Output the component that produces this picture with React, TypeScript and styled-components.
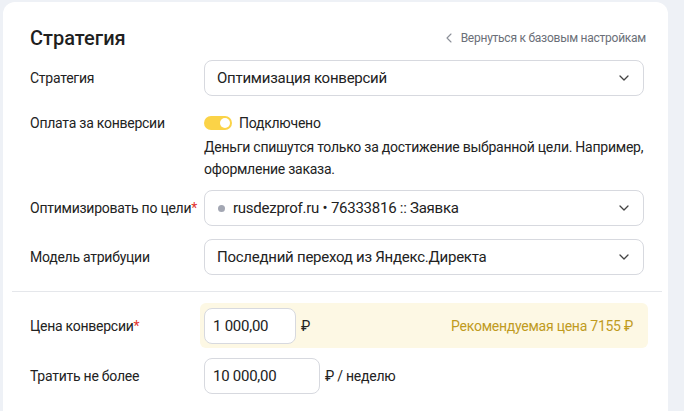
import React from 'react';
import styled, { createGlobalStyle } from 'styled-components';

const GlobalStyle = createGlobalStyle`
  html, body {
    margin: 0;
    padding: 0;
    background: #eef1f6;
    font-family: Roboto, "Liberation Sans", sans-serif;
    color: #222;
  }
`;

const Page = styled.div`
  width: 684px;
  height: 411px;
  overflow: hidden;
  padding: 2px 16px 0 3px;
  box-sizing: border-box;
  letter-spacing: -0.25px;
`;

const Card = styled.div`
  background: #fff;
  border-radius: 12px;
  padding: 0 0 30px;
  min-height: 420px;
`;

const Section = styled.div`
  padding: 0 24px 0 27px;
  display: flex;
  flex-direction: column;
`;

const Header = styled.div`
  display: flex;
  align-items: center;
  justify-content: space-between;
  padding-top: 23px;
  height: 26px;
  margin-bottom: 9px;
`;

const Title = styled.h2`
  margin: 0;
  font-size: 20px;
  font-weight: 500;
  color: #1f1f1f;
  letter-spacing: 0;
`;

const BackLink = styled.a`
  display: flex;
  align-items: center;
  gap: 9px;
  font-size: 12px;
  color: #6b6f78;
  margin-right: -2px;
  cursor: pointer;
`;

const Row = styled.div<{ $gap?: number; $align?: string }>`
  display: grid;
  grid-template-columns: 174px 1fr;
  align-items: ${(p) => p.$align || 'center'};
  margin-bottom: ${(p) => p.$gap ?? 13}px;
`;

const Label = styled.div`
  font-size: 14px;
  color: #222;
  line-height: 20px;
`;

const Required = styled.span`
  color: #e2342d;
`;

const SelectBox = styled.div`
  height: 36px;
  box-sizing: border-box;
  border: 1px solid #d7d9df;
  border-radius: 8px;
  display: flex;
  align-items: center;
  padding: 0 14px 0 12px;
  font-size: 15px;
  color: #222;
  gap: 8px;
`;

const SelectText = styled.span`
  flex: 1;
`;

const Dot = styled.span`
  width: 7px;
  height: 7px;
  border-radius: 50%;
  background: #a3a7b3;
  margin-left: 1px;
`;

const ToggleLine = styled.div`
  display: flex;
  align-items: center;
  gap: 7px;
  font-size: 14px;
  line-height: 20px;
`;

const Toggle = styled.span`
  width: 28px;
  height: 14px;
  border-radius: 7px;
  background: #fbd347;
  position: relative;
  &::after {
    content: '';
    position: absolute;
    right: 2px;
    top: 2px;
    width: 10px;
    height: 10px;
    border-radius: 50%;
    background: #fff;
  }
`;

const Hint = styled.p`
  margin: 3px 0 0;
  font-size: 14px;
  line-height: 22px;
  color: #222;
  max-width: 440px;
`;

const Divider = styled.hr`
  border: 0;
  border-top: 1px solid #e5e7eb;
  margin: 4px 6px 11px 9px;
`;

const PriceRow = styled.div`
  display: grid;
  grid-template-columns: 170px 1fr;
  align-items: center;
  margin-right: -4px;
  margin-bottom: 10px;
`;

const Recommend = styled.div`
  background: #fdf8e4;
  border-radius: 6px;
  height: 45px;
  display: flex;
  align-items: center;
  padding: 0 15px 0 4px;
`;

const Input = styled.div<{ $w: number }>`
  width: ${(p) => p.$w}px;
  height: 36px;
  box-sizing: border-box;
  border: 1px solid #d7d9df;
  border-radius: 8px;
  background: #fff;
  display: flex;
  align-items: center;
  padding-left: 8px;
  font-size: 15px;
  color: #222;
`;

const Unit = styled.span`
  font-size: 14px;
  margin-left: 5px;
  color: #222;
`;

const RecText = styled.span`
  margin-left: auto;
  font-size: 14px;
  color: #c09b1e;
`;

const Field = styled.div`
  display: flex;
  align-items: center;
`;

const Chevron = () => (
  <svg width="10" height="6" viewBox="0 0 10 6" fill="none">
    <path d="M1 1l4 4 4-4" stroke="#444" strokeWidth="1.3" strokeLinecap="round" strokeLinejoin="round" />
  </svg>
);

const Back = () => (
  <svg width="6" height="10" viewBox="0 0 6 10" fill="none">
    <path d="M5 1L1 5l4 4" stroke="#8b8f98" strokeWidth="1.1" strokeLinecap="round" strokeLinejoin="round" />
  </svg>
);

const Select = ({ children, dot }: { children: React.ReactNode; dot?: boolean }) => (
  <SelectBox>
    {dot && <Dot />}
    <SelectText>{children}</SelectText>
    <Chevron />
  </SelectBox>
);

export default function App() {
  return (
    <Page>
      <GlobalStyle />
      <Card>
        <Section>
          <Header>
            <Title>Стратегия</Title>
            <BackLink>
              <Back />
              Вернуться к базовым настройкам
            </BackLink>
          </Header>
          <Row $gap={17}>
            <Label>Стратегия</Label>
            <Select>Оптимизация конверсий</Select>
          </Row>
          <Row $align="start" $gap={10}>
            <Label>Оплата за конверсии</Label>
            <div>
              <ToggleLine>
                <Toggle />
                Подключено
              </ToggleLine>
              <Hint>
                Деньги спишутся только за достижение выбранной цели. Например,
                оформление заказа.
              </Hint>
            </div>
          </Row>
          <Row>
            <Label>
              Оптимизировать по цели<Required>*</Required>
            </Label>
            <Select dot>rusdezprof.ru • 76333816 :: Заявка</Select>
          </Row>
          <Row $gap={12}>
            <Label>Модель атрибуции</Label>
            <Select>Последний переход из Яндекс.Директа</Select>
          </Row>
        </Section>
        <Divider />
        <Section>
          <PriceRow>
            <Label>
              Цена конверсии<Required>*</Required>
            </Label>
            <Recommend>
              <Input $w={92}>1 000,00</Input>
              <Unit>₽</Unit>
              <RecText>Рекомендуемая цена 7155 ₽</RecText>
            </Recommend>
          </PriceRow>
          <Row>
            <Label>Тратить не более</Label>
            <Field>
              <Input $w={116}>10 000,00</Input>
              <Unit>₽ / неделю</Unit>
            </Field>
          </Row>
        </Section>
      </Card>
    </Page>
  );
}
